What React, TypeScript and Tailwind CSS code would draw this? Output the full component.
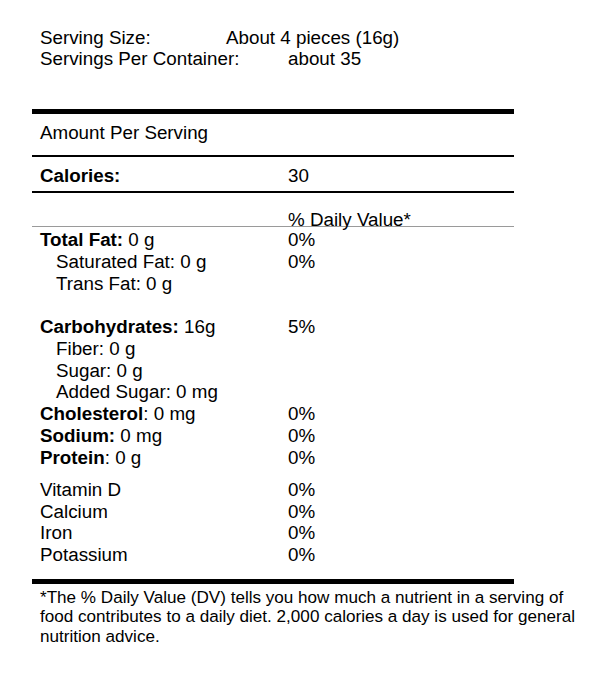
const main = "text-[18.8px] leading-[21.7px]";

type Row = { label: string; bold?: string; rest?: string; dv?: string; indent?: boolean };

const fats: Row[] = [
	{ label: "", bold: "Total Fat:", rest: " 0 g", dv: "0%" },
	{ label: "Saturated Fat: 0 g", dv: "0%", indent: true },
	{ label: "Trans Fat: 0 g", indent: true },
];

const carbs: Row[] = [
	{ label: "", bold: "Carbohydrates:", rest: " 16g", dv: "5%" },
	{ label: "Fiber: 0 g", indent: true },
	{ label: "Sugar: 0 g", indent: true },
	{ label: "Added Sugar: 0 mg", indent: true },
	{ label: "", bold: "Cholesterol", rest: ": 0 mg", dv: "0%" },
	{ label: "", bold: "Sodium:", rest: " 0 mg", dv: "0%" },
	{ label: "", bold: "Protein", rest: ": 0 g", dv: "0%" },
];

const vitamins: Row[] = [
	{ label: "Vitamin D", dv: "0%" },
	{ label: "Calcium", dv: "0%" },
	{ label: "Iron", dv: "0%" },
	{ label: "Potassium", dv: "0%" },
];

function NutrientRow({ label, bold, rest, dv, indent }: Row) {
	return (
		<div className={`flex ${main}`}>
			<div className={`w-[248px] whitespace-pre ${indent ? "pl-4" : ""}`}>
				{bold && <span className="font-bold">{bold}</span>}
				{rest}
				{label}
			</div>
			<div>{dv}</div>
		</div>
	);
}

export default function App() {
	return (
		<div
			className="min-h-[676px] w-[600px] bg-white text-black pl-8 pt-[28px]"
			style={{ fontFamily: '"Liberation Sans", Arial, sans-serif' }}
		>
			<div className="pl-2 text-[18.8px] leading-[20.7px]">
				<div className="flex">
					<div className="w-[186px]">Serving Size:</div>
					<div>About 4 pieces (16g)</div>
				</div>
				<div className="flex">
					<div className="w-[248px]">Servings Per Container:</div>
					<div>about 35</div>
				</div>
			</div>

			<div className="w-[482px] mt-[39.5px]">
				<div className="h-[5px] bg-black" />
				<div className={`pl-2 pt-[8px] pb-[11.4px] ${main}`}>Amount Per Serving</div>
				<div className="h-[2px] bg-black" />
				<div className={`flex pl-2 pt-[7.6px] pb-[4.7px] ${main}`}>
					<div className="w-[248px] font-bold">Calories:</div>
					<div>30</div>
				</div>
				<div className="h-[2px] bg-black" />
				<div className="mt-[20px] pl-2 flex text-[18.8px] leading-[13px]">
					<div className="w-[248px]" />
					<div>% Daily Value*</div>
				</div>
				<div className="h-[1.5px] bg-[#9a9a9a]" />

				<div className="pl-2 pt-[2px]">
					{fats.map((r, i) => (
						<NutrientRow key={i} {...r} />
					))}
					<div className="h-[21.7px]" />
					{carbs.map((r, i) => (
						<NutrientRow key={i} {...r} />
					))}
					<div className="mt-[10.7px]">
						{vitamins.map((r, i) => (
							<NutrientRow key={i} {...r} />
						))}
					</div>
				</div>

				<div className="mt-[13px] h-[5px] bg-black" />
			</div>

			<p className="mt-[4px] pl-2 w-[560px] text-[17.1px] leading-[19.7px]">
				*The % Daily Value (DV) tells you how much a nutrient in a serving of food contributes to a
				daily diet. 2,000 calories a day is used for general nutrition advice.
			</p>
		</div>
	);
}
